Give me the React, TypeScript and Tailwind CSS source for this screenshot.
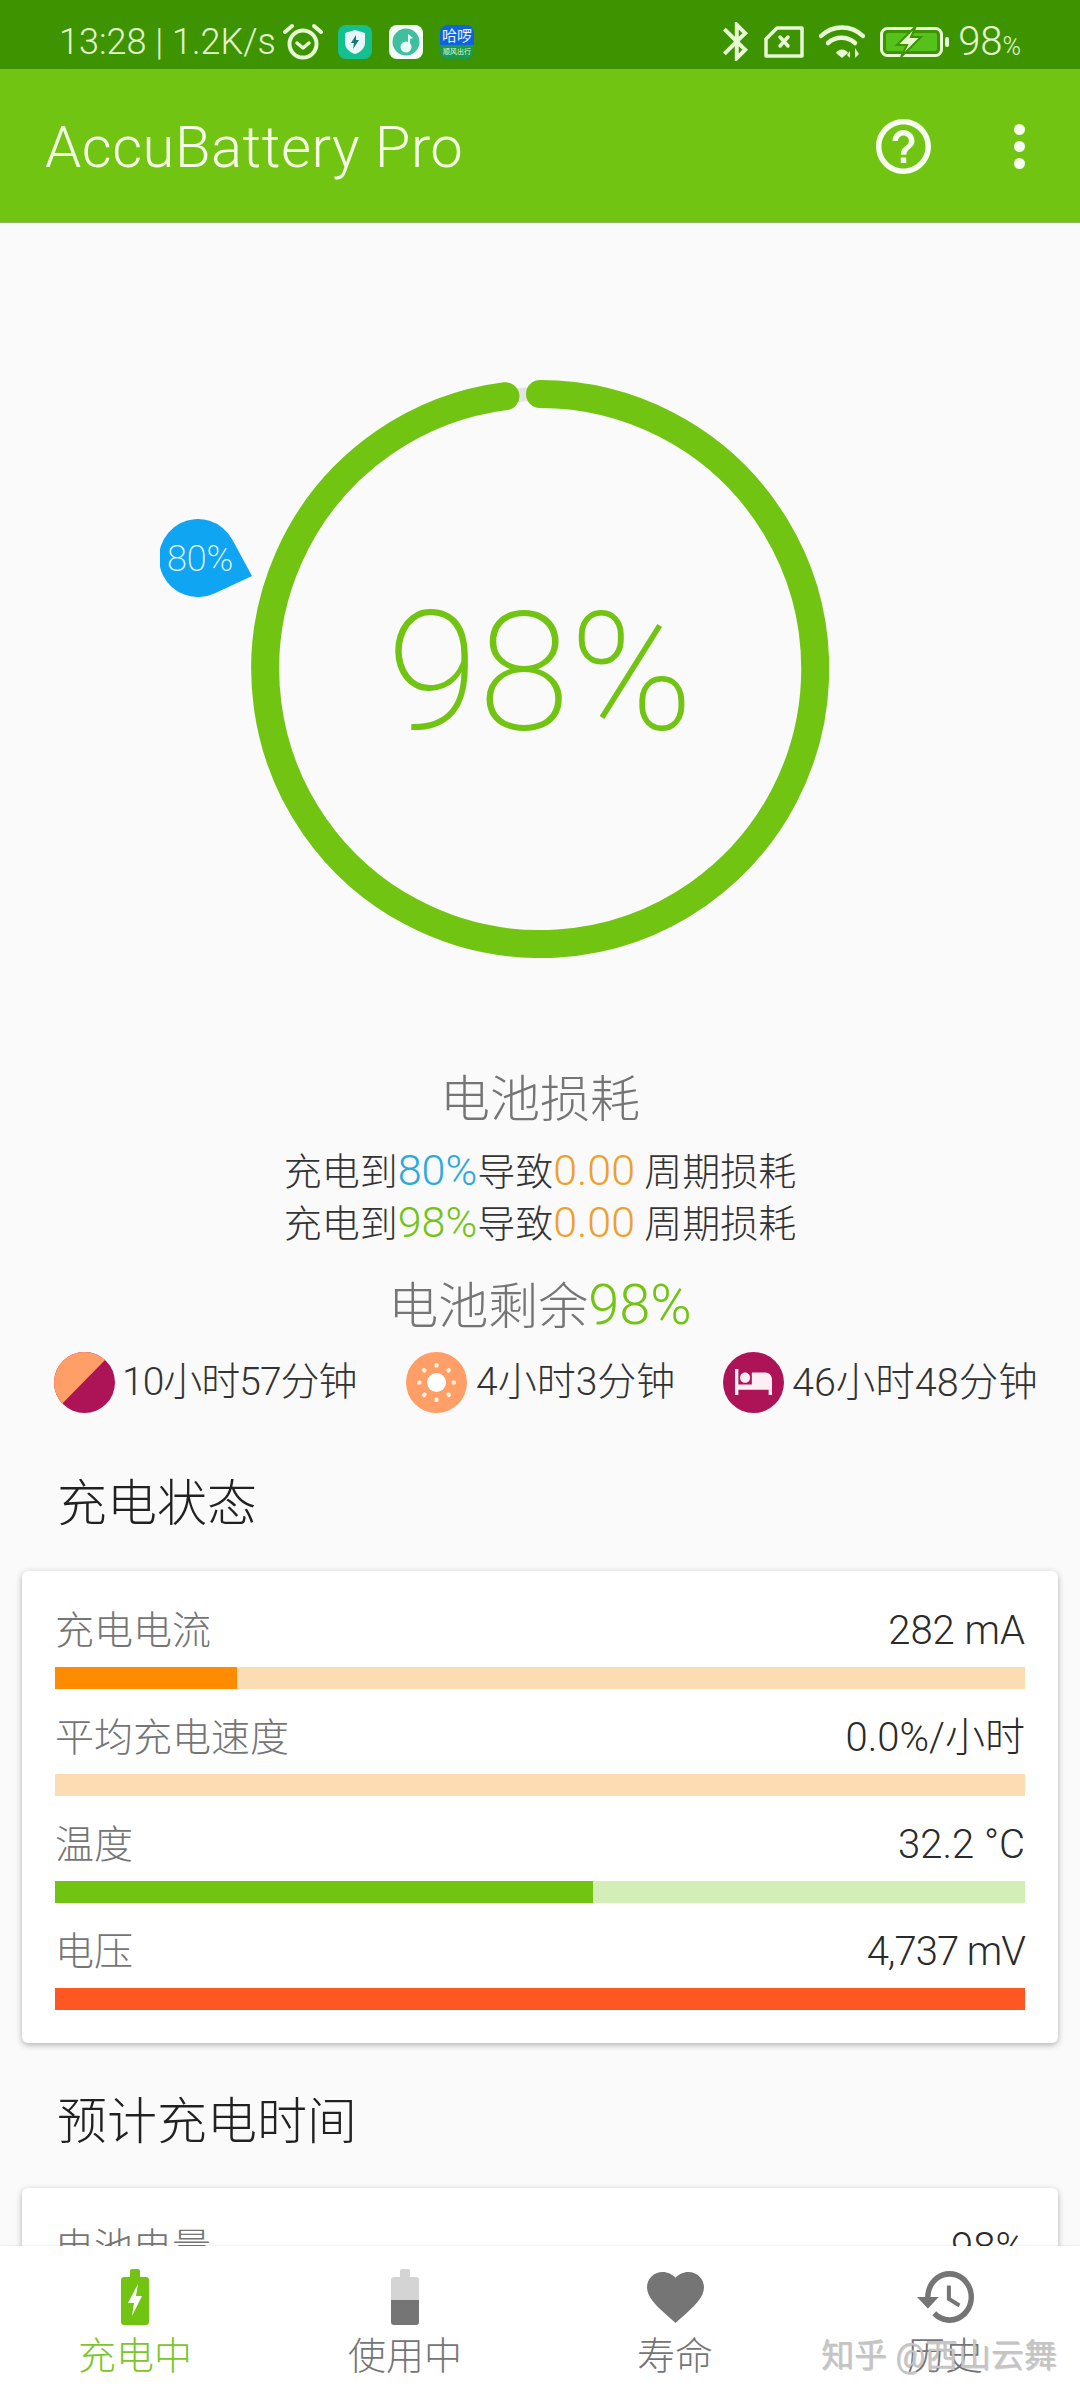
import React from "react";

function Row({ label, value, fill, track, width, tight }: { label: string; value: string; fill: string; track: string; width: number; tight?: boolean }) {
  return (
    <div className="mb-[22px] last:mb-0">
      <div className="flex justify-between items-center h-[52px] mb-[11px] leading-[52px]">
        <span className="text-[#757575] font-light text-[39px] pt-[2px]">{label}</span>
        <span className={`text-[#2a2a2a] font-light text-[40px] pt-[2px] ${tight ? "tracking-[-1px]" : ""}`}>{value}</span>
      </div>
      <div className={`h-[22px] ${track}`}>
        <div className={`h-full ${fill}`} style={{ width: `${width}%` }} />
      </div>
    </div>
  );
}

function BatteryCharging() {
  return (
    <svg width="28" height="56" viewBox="0 0 28 56">
      <path d="M9 2a2 2 0 0 1 2-2h6a2 2 0 0 1 2 2v6h6a3 3 0 0 1 3 3v42a3 3 0 0 1-3 3H3a3 3 0 0 1-3-3V11a3 3 0 0 1 3-3h6z" fill="#72c413" />
      <path d="M17 15 7 34h6l-2 13 10-20h-6z" fill="#ffffff" />
    </svg>
  );
}

function BatteryUse() {
  return (
    <svg width="28" height="56" viewBox="0 0 28 56">
      <path d="M9 2a2 2 0 0 1 2-2h6a2 2 0 0 1 2 2v6h6a3 3 0 0 1 3 3v20H0V11a3 3 0 0 1 3-3h6z" fill="#d4d4d4" />
      <path d="M0 31h28v22a3 3 0 0 1-3 3H3a3 3 0 0 1-3-3z" fill="#757575" />
    </svg>
  );
}

function NavItem({ label, active, children }: { label: string; active?: boolean; children: React.ReactNode }) {
  return (
    <div className="flex flex-col items-center pt-[23px]">
      <div className="h-[56px] flex items-center justify-center">{children}</div>
      <div className={`mt-[8px] text-[38px] leading-[46px] font-light ${active ? "text-[#7cc52a]" : "text-[#757575]"}`}>{label}</div>
    </div>
  );
}

function Sun() {
  const rays = [0, 45, 90, 135, 180, 225, 270, 315];
  return (
    <svg width="61" height="61" viewBox="0 0 61 61" className="shrink-0">
      <circle cx="30.5" cy="30.5" r="30.5" fill="#ff9e66" />
      <circle cx="30.5" cy="30.5" r="9.5" fill="#ffffff" />
      {rays.map((a) => (
        <rect key={a} x="28.5" y="11" width="4" height="4.5" rx="1.5" fill="#fff0d8" transform={`rotate(${a} 30.5 30.5)`} />
      ))}
    </svg>
  );
}

export default function App() {
  return (
    <div className="w-[1080px] h-[2400px] flex flex-col overflow-hidden bg-[#fafafa] font-['Roboto','Noto_Sans_CJK_SC',sans-serif]">
      {/* status bar */}
      <div className="h-[69px] shrink-0 bg-[#3d9400] flex items-center pt-[14px] pl-[59px] pr-[59px] text-[#e4f8d2]">
        <span className="text-[36px] leading-none font-light whitespace-nowrap w-[224px]">13:28 | 1.2K/s</span>
        <svg width="40" height="37" viewBox="0 0 40 37" fill="none" stroke="#e8f9d6">
          <circle cx="20" cy="21" r="13.5" strokeWidth="4" />
          <path d="M14 20l6 5 6-5" strokeWidth="3.5" strokeLinecap="round" strokeLinejoin="round" />
          <path d="M2 9 9 3M38 9l-7-6" strokeWidth="4" strokeLinecap="round" />
        </svg>
        <div className="ml-[15px] w-[34px] h-[34px] rounded-[8px] bg-[#14c08f] flex items-center justify-center">
          <svg width="20" height="24" viewBox="0 0 20 24">
            <path d="M10 0 20 3v9c0 6-4 10-10 12C4 22 0 18 0 12V3z" fill="#e8f7fb" />
            <path d="M11 5 6 13h3l-1 6 6-9h-3z" fill="#147a70" />
          </svg>
        </div>
        <div className="ml-[17px] w-[34px] h-[34px] rounded-[8px] bg-[#f4fdf9] flex items-center justify-center">
          <svg width="28" height="28" viewBox="0 0 28 28">
            <circle cx="14" cy="14" r="13.5" fill="#3fbfa0" />
            <circle cx="14" cy="19" r="5.5" fill="#e8fbf6" />
            <path d="M16 19V6l5 4-3 1v8z" fill="#e8fbf6" />
          </svg>
        </div>
        <div className="ml-[17px] w-[34px] h-[34px] rounded-[8px] bg-[#0f62e0] flex flex-col items-center overflow-hidden">
          <span className="text-[#eaf6ff] text-[15px] leading-[17px] mt-[3px] whitespace-nowrap">哈啰</span>
          <span className="w-full h-[14px] bg-[#1a9a4a] text-[#dff7df] text-[7px] leading-[14px] text-center whitespace-nowrap">顺风出行</span>
        </div>
        <div className="flex-1" />
        <svg width="25" height="39" viewBox="5 2 12.71 20" preserveAspectRatio="none" fill="#e8f9d6">
          <path d="M17.71 7.71L12 2h-1v7.59L6.41 5 5 6.41 10.59 12 5 17.59 6.41 19 11 14.41V22h1l5.71-5.71-4.3-4.29 4.3-4.29zM13 5.83l1.88 1.88L13 9.59V5.83zm1.88 10.46L13 18.17v-3.76l1.88 1.88z" />
        </svg>
        <svg width="40" height="32" viewBox="0 0 40 32" fill="none" stroke="#e8f9d6" className="ml-[16px]">
          <path d="M13 2h25v28H2V13z" strokeWidth="3.5" strokeLinejoin="round" />
          <path d="M16 11l8 9M24 11l-8 9" strokeWidth="3.5" strokeLinecap="round" />
        </svg>
        <svg width="46" height="34" viewBox="0 0 46 34" fill="none" className="ml-[15px]">
          <path d="M2 11a30 30 0 0 1 42 0" stroke="#e8f9d6" strokeWidth="4.5" strokeLinecap="round" />
          <path d="M9 18a20 20 0 0 1 27 0" stroke="#e8f9d6" strokeWidth="4.5" strokeLinecap="round" />
          <path d="M17 28a7 7 0 0 1 12 0l-6 5z" fill="#e8f9d6" />
          <path d="M31 33v-7l-3 4zM36 23v10l4-4z" fill="#e8f9d6" />
        </svg>
        <svg width="70" height="30" viewBox="0 0 70 30" fill="none" className="ml-[15px]">
          <rect x="1.5" y="1.5" width="60" height="27" rx="6" stroke="#e8f9d6" strokeWidth="3" />
          <rect x="6" y="6" width="51" height="18" rx="2" fill="#55c21c" />
          <path d="M36 -1 17 18h10l-6 12 20-20H31z" fill="#e8f9d6" stroke="#3d9400" strokeWidth="2" />
          <rect x="65" y="10" width="4" height="10" rx="2" fill="#e8f9d6" />
        </svg>
        <span className="ml-[8px] whitespace-nowrap font-light text-[40px] leading-none">
          98<span className="text-[25px]">%</span>
        </span>
      </div>

      {/* app bar */}
      <div className="h-[154px] shrink-0 bg-[#72c413] border-b border-[#8eb36a] flex items-center pt-[2px] pl-[45px] pr-[55px]">
        <span className="text-[#f5fce6] text-[58px] leading-none font-light tracking-[0.5px]">AccuBattery Pro</span>
        <div className="flex-1" />
        <svg width="55" height="55" viewBox="2 2 20 20" fill="#f7fdf0">
          <path d="M11 18h2v-2h-2v2zm1-16C6.48 2 2 6.48 2 12s4.48 10 10 10 10-4.48 10-10S17.52 2 12 2zm0 18c-4.41 0-8-3.59-8-8s3.59-8 8-8 8 3.59 8 8-3.59 8-8 8zm0-14c-2.21 0-4 1.79-4 4h2c0-1.1.9-2 2-2s2 .9 2 2c0 2-3 1.75-3 5h2c0-2.25 3-2.5 3-5 0-2.21-1.79-4-4-4z" />
        </svg>
        <div className="ml-[83px] flex flex-col gap-[6px]">
          <div className="w-[11px] h-[11px] rounded-full bg-[#f7fdf0]" />
          <div className="w-[11px] h-[11px] rounded-full bg-[#f7fdf0]" />
          <div className="w-[11px] h-[11px] rounded-full bg-[#f7fdf0]" />
        </div>
      </div>

      {/* main */}
      <div className="flex-1 min-h-0 overflow-hidden">
        <div className="pt-[157px]">
          <div className="relative w-[578px] h-[578px] mx-auto flex items-center justify-center">
            <svg width="578" height="578" viewBox="0 0 578 578" fill="none" className="absolute inset-0">
              <circle cx="289" cy="289" r="275" stroke="#e4e4e4" strokeWidth="14" />
              <path d="M289 14A275 275 0 1 1 254.5 16.2" stroke="#72c413" strokeWidth="28" strokeLinecap="round" />
            </svg>
            <span className="text-[#72c413] text-[166px] leading-none font-extralight pt-[8px]">98%</span>
            <div className="absolute left-[-91px] top-[139px] w-[92px] h-[78px]">
              <svg width="92" height="78" viewBox="0 0 92 78" className="absolute inset-0">
                <path d="M72.3 20.5L92 57 54.4 74.4A39 39 0 1 1 72.3 20.5Z" fill="#10a5f2" />
              </svg>
              <span className="absolute left-[7px] top-[21px] text-[#f0fbff] text-[36px] leading-[38px] font-extralight">80%</span>
            </div>
          </div>
        </div>

        <div className="mt-[112px] text-center text-[#757575] text-[50px] leading-[60px] font-light">电池损耗</div>
        <div className="mt-[14px] text-center text-[#333333] text-[38px] font-light">
          <div className="h-[52px] leading-[52px]">
            充电到<span className="text-[#29a9dc] text-[43px]">80%</span>导致<span className="text-[#eda02a] text-[43px]">0.00</span> 周期损耗
          </div>
          <div className="h-[52px] leading-[52px]">
            充电到<span className="text-[#72c413] text-[43px]">98%</span>导致<span className="text-[#eda02a] text-[43px]">0.00</span> 周期损耗
          </div>
        </div>
        <div className="mt-[27px] h-[60px] text-center text-[#757575] text-[50px] leading-[60px] font-light">
          电池剩余<span className="text-[#72c413] text-[56px]">98%</span>
        </div>

        <div className="mt-[17px] h-[61px] flex items-center pl-[54px] text-[39px] text-[#333333] font-light whitespace-nowrap">
          <svg width="61" height="61" viewBox="0 0 61 61" className="shrink-0">
            <circle cx="30.5" cy="30.5" r="30.5" fill="#ad1457" />
            <path d="M51 7.9A30.5 30.5 0 0 0 8.4 51.5Z" fill="#ff9e66" />
          </svg>
          <span className="ml-[7px] w-[284px] tracking-[-1px]">10小时57分钟</span>
          <Sun />
          <span className="ml-[9px] w-[247px]">4小时3分钟</span>
          <svg width="61" height="61" viewBox="0 0 61 61" className="shrink-0">
            <circle cx="30.5" cy="30.5" r="30.5" fill="#ad1457" />
            <svg x="12" y="17" width="37" height="26" viewBox="1 5 22 15" preserveAspectRatio="none">
              <path d="M7 13c1.66 0 3-1.34 3-3S8.66 7 7 7s-3 1.34-3 3 1.34 3 3 3zm12-6h-8v7H3V5H1v15h2v-3h18v3h2v-9c0-2.21-1.79-4-4-4z" fill="#fdeef4" />
            </svg>
          </svg>
          <span className="ml-[8px] text-[39.5px]">46小时48分钟</span>
        </div>

        <div className="mt-[59px] pl-[57px] pt-[2px] h-[60px] text-[#212121] text-[50px] leading-[60px] font-light">充电状态</div>
        <div className="mt-[39px] mx-[22px] bg-white rounded-[6px] shadow-[0_2px_6px_rgba(0,0,0,0.3)] px-[33px] py-[33px]">
          <Row label="充电电流" value="282 mA" fill="bg-[#ff8c00]" track="bg-[#fcdcb3]" width={18.8} />
          <Row label="平均充电速度" value="0.0%/小时" fill="bg-[#ff8c00]" track="bg-[#fcdcb3]" width={0} />
          <Row label="温度" value="32.2 °C" fill="bg-[#72c413]" track="bg-[#d4eeb8]" width={55.5} />
          <Row label="电压" value="4,737 mV" fill="bg-[#ff5722]" track="bg-[#ffccbc]" width={100} tight />
        </div>

        <div className="mt-[47px] pl-[57px] pt-[2px] h-[60px] text-[#212121] text-[50px] leading-[60px] font-light">预计充电时间</div>
        <div className="mt-[38px] mx-[22px] bg-white rounded-[6px] shadow-[0_2px_6px_rgba(0,0,0,0.3)] px-[33px] py-[33px]">
          <Row label="电池电量" value="98%" fill="bg-[#72c413]" track="bg-[#d4eeb8]" width={98} />
        </div>
      </div>

      {/* bottom nav */}
      <div className="relative h-[154px] shrink-0 bg-white grid grid-cols-4 shadow-[0_-1px_2px_rgba(0,0,0,0.06)]">
        <NavItem label="充电中" active>
          <BatteryCharging />
        </NavItem>
        <NavItem label="使用中">
          <BatteryUse />
        </NavItem>
        <NavItem label="寿命">
          <svg width="57" height="51" viewBox="2 3 20 18.35" preserveAspectRatio="none" fill="#757575">
            <path d="M12 21.35l-1.45-1.32C5.4 15.36 2 12.28 2 8.5 2 5.42 4.42 3 7.5 3c1.74 0 3.41.81 4.5 2.09C13.09 3.81 14.76 3 16.5 3 19.58 3 22 5.42 22 8.5c0 3.78-3.4 6.86-8.55 11.54L12 21.35z" />
          </svg>
        </NavItem>
        <NavItem label="历史">
          <svg width="57" height="52" viewBox="1 3 21 18" preserveAspectRatio="none" fill="#757575">
            <path d="M13 3c-4.97 0-9 4.03-9 9H1l3.89 3.89.07.14L9 12H6c0-3.87 3.13-7 7-7s7 3.13 7 7-3.13 7-7 7c-1.93 0-3.68-.79-4.94-2.06l-1.42 1.42C8.27 19.99 10.51 21 13 21c4.97 0 9-4.03 9-9s-4.03-9-9-9zm-1 5v5l4.28 2.54.72-1.21-3.5-2.08V8H12z" />
          </svg>
        </NavItem>
        <div className="absolute left-[821px] top-[90px] text-[33px] leading-[40px] text-[#c4c4c4] whitespace-nowrap [text-shadow:1px_1px_0_rgba(120,120,120,0.35)]">
          知乎 @西山云舞
        </div>
      </div>
    </div>
  );
}
